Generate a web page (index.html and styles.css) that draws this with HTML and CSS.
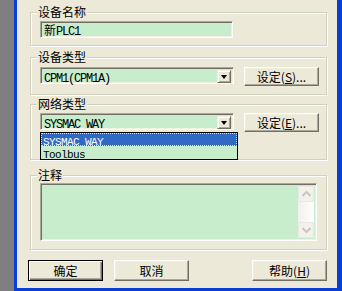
FILE: index.html
```html
<!DOCTYPE html>
<html>
<head>
<meta charset="utf-8">
<link rel="stylesheet" href="styles.css">
</head>
<body>
<div class="window">
  <div class="dialog">
    <div class="group g1">
      <span class="gtitle">设备名称</span>
      <div class="field name-field"><span class="cjk">新</span><span class="lat">PLC1</span></div>
    </div>
    <div class="group g2">
      <span class="gtitle">设备类型</span>
      <div class="row">
        <div class="combo">
          <div class="combo-text"><span class="lat">CPM1(CPM1A)</span></div>
          <div class="combo-btn"><span class="tri"></span></div>
        </div>
        <button class="btn set-btn">设定(<u>S</u>)...</button>
      </div>
    </div>
    <div class="group g3">
      <span class="gtitle">网络类型</span>
      <div class="row">
        <div class="combo open">
          <div class="combo-text"><span class="lat">SYSMAC WAY</span></div>
          <div class="combo-btn"><span class="tri"></span></div>
          <ul class="droplist">
            <li class="sel"><span class="lat">SYSMAC WAY</span></li>
            <li><span class="lat">Toolbus</span></li>
          </ul>
        </div>
        <button class="btn set-btn">设定(<u>E</u>)...</button>
      </div>
    </div>
    <div class="group g4">
      <span class="gtitle">注释</span>
      <div class="memo">
        <div class="memo-text"></div>
        <div class="vscroll">
          <div class="sbtn up"><svg width="9" height="6" viewBox="0 0 9 6"><path d="M0.5 5 L4.5 1 L8.5 5" fill="none" stroke="#C9C7BA" stroke-width="2"/></svg></div>
          <div class="track"></div>
          <div class="sbtn down"><svg width="9" height="6" viewBox="0 0 9 6"><path d="M0.5 1 L4.5 5 L8.5 1" fill="none" stroke="#C9C7BA" stroke-width="2"/></svg></div>
        </div>
      </div>
    </div>
    <div class="buttons">
      <button class="btn big default">确定</button>
      <button class="btn big">取消</button>
      <span class="spacer"></span>
      <button class="btn big">帮助(<u>H</u>)</button>
    </div>
  </div>
</div>
</body>
</html>
```

FILE: styles.css
```css
* { box-sizing: border-box; }
html, body { margin: 0; padding: 0; }
body {
  width: 342px;
  height: 291px;
  background: #7f7f7f;
  overflow: hidden;
  font-family: "Noto Sans CJK SC", sans-serif;
  font-size: 12px;
  color: #000;
}
.window {
  margin-left: 14px;
  width: 328px;
  height: 291px;
  border-left: 3px solid #0a3dd6;
  border-right: 5px solid #0a3dd6;
  border-bottom: 3px solid #0a3dd6;
  box-shadow: inset -1px 0 0 #5a7fe8;
}
.dialog {
  height: 288px;
  background: #ece9d8;
  padding: 12px 10px 0 13px;
  display: flex;
  flex-direction: column;
}
.cjk { font-family: "Noto Sans CJK SC", sans-serif; letter-spacing: 0; }
.lat {
  font-family: "Liberation Mono", monospace;
  font-size: 12px;
  letter-spacing: -1.2px;
}
.group {
  position: relative;
  border: 1px solid #d0d0bf;
  box-shadow: 1px 1px 0 #fff, inset 1px 1px 0 #fff;
  padding-left: 9px;
}
.gtitle {
  position: absolute;
  top: -9px;
  left: 6px;
  padding: 0 1px;
  background: #ece9d8;
  line-height: 16px;
  font-size: 12px;
}
.g1 { height: 34px; padding-top: 8px; }
.g2 { height: 38px; margin-top: 11px; padding-top: 9px; }
.g3 { height: 56px; margin-top: 9px; padding-top: 8px; }
.g4 { height: 75px; margin-top: 15px; padding-top: 7px; }

.field, .combo, .memo {
  background: #c7edcc;
  border: 1px solid;
  border-color: #aca899 #fff #fff #aca899;
  box-shadow: inset 1px 1px 0 #716f64, inset -1px -1px 0 #f1efe2;
}
.field {
  width: 193px;
  height: 17px;
  line-height: 15px;
  padding-left: 3px;
  white-space: nowrap;
}
.row { display: flex; align-items: flex-start; gap: 10px; }
.combo {
  position: relative;
  width: 194px;
  height: 17px;
  display: flex;
  padding: 2px;
}
.combo-text {
  flex: 1;
  line-height: 13px;
  padding-left: 1px;
  white-space: nowrap;
}
.combo-btn {
  width: 14px;
  height: 13px;
  background: #ece9d8;
  border: 1px solid;
  border-color: #f1efe2 #716f64 #716f64 #f1efe2;
  box-shadow: inset 1px 1px 0 #fff, inset -1px -1px 0 #aca899;
  display: flex;
  align-items: center;
  justify-content: center;
}
.tri {
  width: 0; height: 0;
  border-left: 3.5px solid transparent;
  border-right: 3.5px solid transparent;
  border-top: 4px solid #000;
  margin-top: 1px;
}
.btn {
  font-family: "Noto Sans CJK SC", sans-serif;
  font-size: 12px;
  color: #000;
  background: #ece9d8;
  border: 1px solid;
  border-color: #fff #716f64 #716f64 #fff;
  box-shadow: inset -1px -1px 0 #aca899, inset 1px 1px 0 #f1efe2;
  padding: 0;
  margin: 0;
  line-height: 16px;
  border-radius: 0;
}
.btn u { text-decoration: underline; text-underline-offset: 1px; }
.set-btn { width: 75px; height: 19px; }
.droplist {
  position: absolute;
  left: -1px;
  top: 18px;
  width: 198px;
  margin: 0;
  padding: 0;
  list-style: none;
  background: #c7edcc;
  border: 1px solid #000;
  z-index: 2;
}
.droplist li {
  height: 13px;
  line-height: 13px;
  padding-left: 2px;
  white-space: nowrap;
}
.droplist li .lat {
  font-size: 11px;
  letter-spacing: -0.6px;
}
.droplist li.sel {
  background: #316ac5;
  color: #fff;
  outline: 1px dotted #c7edcc;
  outline-offset: -1px;
}
.memo {
  width: 277px;
  height: 58px;
  display: flex;
  padding: 2px;
}
.memo-text { flex: 1; }
.vscroll {
  width: 16px;
  display: flex;
  flex-direction: column;
  background: linear-gradient(to right, #f3f1ec, #fefefe);
}
.sbtn {
  height: 16px;
  border: 1px solid #e9e7df;
  border-radius: 2px;
  background: #f2f1ec;
  display: flex;
  align-items: center;
  justify-content: center;
}
.track { flex: 1; }
.buttons {
  display: flex;
  margin-top: 10px;
  margin-left: -2px;
  gap: 11px;
}
.spacer { flex: 1; }
.big { width: 75px; height: 21px; }
.btn.default {
  border: 1px solid #000;
  box-shadow: inset 1px 1px 0 #fff, inset -1px -1px 0 #716f64, inset -2px -2px 0 #aca899;
}
```
